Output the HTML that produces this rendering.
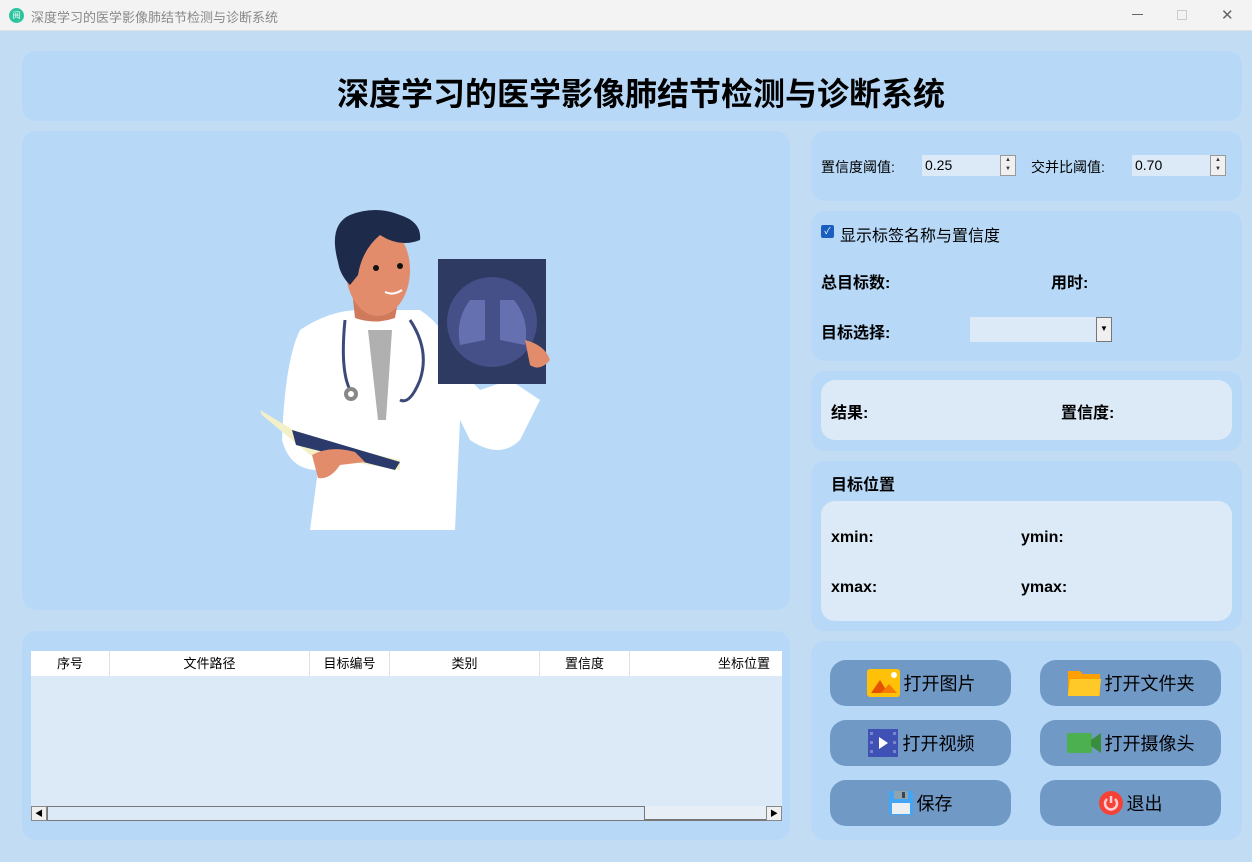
<!DOCTYPE html>
<html><head><meta charset="utf-8"><style>
*{margin:0;padding:0;box-sizing:border-box}
body{width:1252px;height:862px;background:#c2dcf3;font-family:"Liberation Sans","Noto Sans CJK SC",sans-serif;position:relative;overflow:hidden;color:#000}
.a{position:absolute}
.tb{left:0;top:0;width:1252px;height:31px;background:#f3f3f3;border-bottom:1px solid #e0e0e0}
.p{position:absolute;background:#b7d9f7;border-radius:14px}
.ib{position:absolute;background:#dce9f6;border-radius:14px}
.b{font-weight:bold;font-size:16px}
.btn{position:absolute;width:181px;height:46px;background:#7099c6;border-radius:16px;display:flex;align-items:center;justify-content:center;font-size:18px;gap:4px}
.th{position:absolute;top:651px;height:25px;background:#fff;font-size:13px;text-align:center;line-height:25px;border-right:1px solid #e3e3e3}
.spin{position:absolute;width:16px;height:21px;background:#f0f0f0;border:1px solid #999;font-size:6px;line-height:9px;text-align:center;color:#333}
</style></head><body>
<div class="a tb"></div>
<div class="a" style="left:9px;top:8px;width:15px;height:15px;border-radius:50%;background:#2ec4a0;color:#fff;font-size:8px;text-align:center;line-height:15px">阅</div>
<div class="a" style="left:31px;top:7px;font-size:13px;color:#888">深度学习的医学影像肺结节检测与诊断系统</div>
<div class="a" style="left:1132px;top:14px;width:11px;height:1px;background:#666"></div>
<div class="a" style="left:1177px;top:10px;width:10px;height:10px;border:1px solid #ccc"></div>
<div class="a" style="left:1221px;top:6px;font-size:15px;color:#666">✕</div>

<div class="p" style="left:22px;top:51px;width:1220px;height:70px"></div>
<div class="a" style="left:0;width:1282px;top:69px;text-align:center;font-size:32px;font-weight:bold">深度学习的医学影像肺结节检测与诊断系统</div>

<div class="p" style="left:22px;top:131px;width:768px;height:479px"></div>
<svg class="a" style="left:250px;top:200px" width="310" height="340" viewBox="250 200 310 340">
<path d="M300 330 Q330 310 360 310 L420 310 Q450 330 460 370 L480 390 L510 380 L540 400 L520 440 Q500 460 470 440 L460 420 L455 530 L310 530 L318 470 Q290 470 282 440 Q285 360 300 330Z" fill="#fff"/>
<path d="M368 330 L392 330 L386 420 L378 420Z" fill="#b0b0b0"/>
<path d="M352 290 L355 318 Q375 325 395 318 L400 290Z" fill="#d07a5c"/>
<ellipse cx="378" cy="270" rx="32" ry="46" fill="#e28c6b"/>
<path d="M338 262 Q328 225 350 215 Q375 205 400 215 Q422 222 420 240 Q400 248 380 235 Q362 250 358 275 L350 285 Q340 275 338 262Z" fill="#1e2a4a"/>
<circle cx="376" cy="268" r="3" fill="#111"/><circle cx="400" cy="266" r="3" fill="#111"/>
<path d="M385 292 Q393 296 402 290" stroke="#fff" stroke-width="2" fill="none"/>
<path d="M345 320 Q340 370 350 390 M410 320 Q430 350 420 380 Q410 405 400 400" stroke="#3c4a7a" stroke-width="3" fill="none"/>
<circle cx="351" cy="394" r="7" fill="#888"/><circle cx="351" cy="394" r="3" fill="#fff"/>
<rect x="438" y="259" width="108" height="125" fill="#2e3a62"/>
<circle cx="492" cy="322" r="45" fill="#454f88"/>
<path d="M470 300 Q455 320 460 345 L485 340 L485 300Z M514 300 Q530 320 525 345 L500 340 L500 300Z" fill="#6570b0"/>
<path d="M525 340 Q545 345 550 360 Q540 372 530 365Z" fill="#e28c6b"/>
<path d="M260 410 L310 440 L400 460 L400 470 L310 455 L262 415Z" fill="#f3efc8"/>
<path d="M292 430 L400 462 L395 470 L296 445Z" fill="#2b3a6a"/>
<path d="M312 455 Q330 445 355 452 L365 462 L340 465 Q330 480 318 478Z" fill="#e28c6b"/>
</svg>

<div class="p" style="left:22px;top:631px;width:768px;height:209px"></div>
<div class="a" style="left:31px;top:651px;width:751px;height:170px;background:#dce9f6"></div>
<div class="th" style="left:31px;width:79px">序号</div>
<div class="th" style="left:110px;width:200px">文件路径</div>
<div class="th" style="left:310px;width:80px">目标编号</div>
<div class="th" style="left:390px;width:150px">类别</div>
<div class="th" style="left:540px;width:90px">置信度</div>
<div class="th" style="left:630px;width:152px;text-align:right;padding-right:12px;border:none">坐标位置</div>
<div class="a" style="left:31px;top:806px;width:751px;height:15px;background:#e8eef6;border-bottom:2px solid #777"></div>
<div class="a" style="left:31px;top:806px;width:16px;height:15px;background:#f0f0f0;border:1px solid #888;font-size:8px;text-align:center;line-height:13px">◀</div>
<div class="a" style="left:47px;top:806px;width:598px;height:15px;background:#dce9f6;border:1px solid #777"></div>
<div class="a" style="left:766px;top:806px;width:16px;height:15px;background:#f0f0f0;border:1px solid #888;font-size:8px;text-align:center;line-height:13px">▶</div>

<div class="p" style="left:811px;top:131px;width:431px;height:70px"></div>
<div class="a" style="left:821px;top:157px;font-size:14px">置信度阈值:</div>
<div class="a" style="left:922px;top:155px;width:94px;height:21px;background:#dce9f6;font-size:14px;padding:2px 3px">0.25</div>
<div class="spin" style="left:1000px;top:155px">▲<br>▼</div>
<div class="a" style="left:1031px;top:157px;font-size:14px">交并比阈值:</div>
<div class="a" style="left:1132px;top:155px;width:94px;height:21px;background:#dce9f6;font-size:14px;padding:2px 3px">0.70</div>
<div class="spin" style="left:1210px;top:155px">▲<br>▼</div>

<div class="p" style="left:811px;top:211px;width:431px;height:150px"></div>
<div class="a" style="left:821px;top:225px;width:13px;height:13px;background:#1a5fc0;border-radius:2px;color:#fff;font-size:9px;text-align:center;line-height:13px">✓</div>
<div class="a" style="left:840px;top:222px;font-size:16px">显示标签名称与置信度</div>
<div class="a b" style="left:821px;top:269px">总目标数:</div>
<div class="a b" style="left:1051px;top:269px">用时:</div>
<div class="a b" style="left:821px;top:319px">目标选择:</div>
<div class="a" style="left:970px;top:317px;width:142px;height:25px;background:#dce9f6"></div>
<div class="a" style="left:1096px;top:317px;width:16px;height:25px;background:#f0f0f0;border:1px solid #777;font-size:8px;text-align:center;line-height:22px">▼</div>

<div class="p" style="left:811px;top:371px;width:431px;height:80px"></div>
<div class="ib" style="left:821px;top:380px;width:411px;height:60px"></div>
<div class="a b" style="left:831px;top:399px">结果:</div>
<div class="a b" style="left:1061px;top:399px">置信度:</div>

<div class="p" style="left:811px;top:461px;width:431px;height:170px"></div>
<div class="a b" style="left:831px;top:471px">目标位置</div>
<div class="ib" style="left:821px;top:501px;width:411px;height:120px"></div>
<div class="a b" style="left:831px;top:529px">xmin:</div>
<div class="a b" style="left:1021px;top:529px">ymin:</div>
<div class="a b" style="left:831px;top:579px">xmax:</div>
<div class="a b" style="left:1021px;top:579px">ymax:</div>

<div class="p" style="left:811px;top:641px;width:431px;height:199px"></div>
<div class="btn" style="left:830px;top:660px"><svg width="34" height="30"><rect x="1" y="1" width="33" height="28" rx="3" fill="#ffc107"/><path d="M5 25 L14 12 L22 25Z" fill="#e65100"/><path d="M15 25 L23 16 L31 25Z" fill="#f57c00"/><circle cx="28" cy="7" r="3" fill="#fff"/></svg>打开图片</div>
<div class="btn" style="left:1040px;top:660px"><svg width="34" height="30"><path d="M1 3 h12 l3 3 h17 v22 h-32z" fill="#ffa000"/><path d="M3 11 h31 l-2 17 h-31z" fill="#ffca28"/></svg>打开文件夹</div>
<div class="btn" style="left:830px;top:720px"><svg width="32" height="30"><rect x="1" y="1" width="30" height="28" fill="#3f51b5"/><path d="M12 9 L21 15 L12 21Z" fill="#fff"/><g fill="#7986cb"><rect x="3" y="4" width="3" height="3"/><rect x="3" y="13" width="3" height="3"/><rect x="3" y="22" width="3" height="3"/><rect x="26" y="4" width="3" height="3"/><rect x="26" y="13" width="3" height="3"/><rect x="26" y="22" width="3" height="3"/></g></svg>打开视频</div>
<div class="btn" style="left:1040px;top:720px"><svg width="34" height="24"><rect x="0" y="2" width="25" height="20" rx="2" fill="#4caf50"/><path d="M24 9 L34 2 V22 L24 15Z" fill="#388e3c"/></svg>打开摄像头</div>
<div class="btn" style="left:830px;top:780px"><svg width="24" height="24"><rect x="0" y="0" width="24" height="24" rx="2" fill="#42a5f5"/><rect x="5" y="0" width="14" height="8" fill="#90a4ae"/><rect x="13" y="1" width="3" height="6" fill="#37474f"/><rect x="3" y="12" width="18" height="11" fill="#eceff1"/></svg>保存</div>
<div class="btn" style="left:1040px;top:780px"><svg width="24" height="24"><circle cx="12" cy="12" r="12" fill="#f44336"/><path d="M8 8 A6 6 0 1 0 16 8" stroke="#ffcdd2" stroke-width="2.5" fill="none"/><path d="M12 5 V12" stroke="#ffcdd2" stroke-width="2.5"/></svg>退出</div>
</body></html>
